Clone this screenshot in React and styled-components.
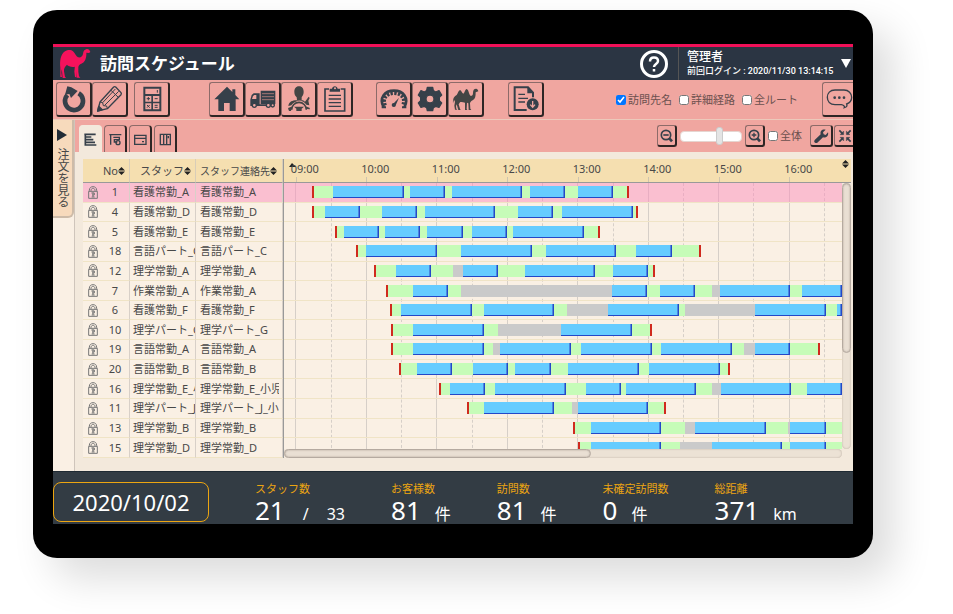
import React, { useState } from 'react';
import styled, { createGlobalStyle } from 'styled-components';

const DAY_START = -10; // minutes from 09:00
const DAY_END = 465;
const HOURS = ['09:00', '10:00', '11:00', '12:00', '13:00', '14:00', '15:00', '16:00'];

// visits: [start, minutes], waits: [from, to], all counted from 09:00
const STAFF = [
  { no: 1, name: '看護常勤_A', tel: '看護常勤_A', from: 14, to: 284, visits: [[32, 60], [97, 30], [133, 60], [199, 30], [240, 30]], waits: [] },
  { no: 4, name: '看護常勤_D', tel: '看護常勤_D', from: 14, to: 291, visits: [[25, 30], [73, 30], [110, 60], [189, 30], [227, 60]], waits: [] },
  { no: 5, name: '看護常勤_E', tel: '看護常勤_E', from: 33, to: 259, visits: [[41, 30], [76, 30], [112, 30], [150, 30], [185, 60]], waits: [] },
  { no: 18, name: '言語パート_C', tel: '言語パート_C', from: 51, to: 345, visits: [[60, 60], [141, 60], [213, 60], [290, 30]], waits: [] },
  { no: 12, name: '理学常勤_A', tel: '理学常勤_A', from: 67, to: 306, visits: [[85, 30], [142, 30], [195, 60], [270, 30]], waits: [[134, 142]] },
  { no: 7, name: '作業常勤_A', tel: '作業常勤_A', from: 77, to: 500, visits: [[100, 30], [269, 30], [310, 30], [361, 60], [431, 60]], waits: [[141, 269], [354, 361]] },
  { no: 6, name: '看護常勤_F', tel: '看護常勤_F', from: 80, to: 500, visits: [[90, 60], [160, 60], [266, 60], [391, 60], [461, 30]], waits: [[231, 266], [331, 391]] },
  { no: 10, name: '理学パート_G', tel: '理学パート_G', from: 81, to: 303, visits: [[100, 60], [226, 60]], waits: [[172, 226]] },
  { no: 19, name: '言語常勤_A', tel: '言語常勤_A', from: 81, to: 446, visits: [[100, 60], [174, 60], [243, 60], [311, 60], [391, 30]], waits: [[168, 174], [382, 391]] },
  { no: 20, name: '言語常勤_B', tel: '言語常勤_B', from: 88, to: 370, visits: [[103, 30], [151, 30], [187, 30], [232, 60], [301, 60]], waits: [] },
  { no: 16, name: '理学常勤_E_小児', tel: '理学常勤_E_小児', from: 122, to: 500, visits: [[131, 30], [170, 60], [247, 30], [281, 60], [362, 60], [435, 60]], waits: [[354, 362]] },
  { no: 11, name: '理学パート_J_小児', tel: '理学パート_J_小児', from: 146, to: 315, visits: [[160, 60], [240, 60]], waits: [[235, 240]] },
  { no: 13, name: '理学常勤_B', tel: '理学常勤_B', from: 236, to: 500, visits: [[251, 60], [340, 60], [421, 30]], waits: [[331, 340], [419, 421]] },
  { no: 15, name: '理学常勤_D', tel: '理学常勤_D', from: 240, to: 500, visits: [[251, 60], [354, 60], [421, 30]], waits: [[327, 354]] },
];

const STATS = [
  { label: 'スタッフ数', value: '21', slash: true, unit: '33' },
  { label: 'お客様数', value: '81', unit: '件' },
  { label: '訪問数', value: '81', unit: '件' },
  { label: '未確定訪問数', value: '0', unit: '件' },
  { label: '総距離', value: '371', unit: 'km' },
];

// fills the spaces between visits and waits with travel time
const toSegments = ({ from, to, visits, waits }) => {
  const busy = [
    ...visits.map(([s, m]) => ({ kind: 'visit', s, e: s + m })),
    ...waits.map(([s, e]) => ({ kind: 'wait', s, e })),
  ].sort((a, b) => a.s - b.s);
  const out = [{ kind: 'idle', s: DAY_START, e: from }];
  let now = from;
  busy.forEach((b) => {
    if (b.s > now) out.push({ kind: 'travel', s: now, e: b.s, first: now === from });
    out.push(b);
    now = b.e;
  });
  if (to > now) out.push({ kind: 'travel', s: now, e: to, last: true });
  if (to < DAY_END) out.push({ kind: 'idle', s: to, e: DAY_END });
  return out
    .filter((seg) => seg.s < DAY_END)
    .map((seg) => ({ ...seg, e: Math.min(seg.e, DAY_END), last: seg.last && seg.e <= DAY_END }));
};

const LogoCamel = () => (
  <svg width="32" height="31" viewBox="80 141 96 93" fill="#f5125c" aria-hidden="true">
    <path d="M84 200C82 182 84 160 98 151C107 145 117 146 122 151C129 157 131 166 137 169C145 171 150 166 152 159C153 150 156 146 163 144C168 143 172 147 174 153L170 156L162 155C163 170 158 184 147 188C142 190 139 193 138 198L138 212L140 226L144 230H133L132 212L128 197C118 199 108 196 104 191C99 196 94 202 95 211L98 227L101 231H91L89 210L88 205L87 216L89 228L84 228Z" />
    <path d="M128 192L126 212L128 228L132 229L135 194Z" />
  </svg>
);

const SortIcon = () => (
  <svg width="7" height="8" viewBox="0 0 14 16" fill="#222" aria-hidden="true">
    <path d="M7 0L14 7H0ZM7 16L0 9H14Z" />
  </svg>
);

const LockIcon = () => (
  <svg width="10" height="13" viewBox="0 0 30 39" fill="none" stroke="#777" strokeWidth="3" aria-hidden="true">
    <path d="M4 16V13C4 5 9 2 15 2S26 5 26 13V16M9 16V14C9 9 12 7 15 7S21 9 21 14V16" />
    <path d="M2 16H28V37H2Z" />
    <path d="M15 19V33M10 21H19V27H12M11 33H20" />
  </svg>
);

const dark = '#36404a';

const art = {
  reload: (
    <>
      <path d="M68 34A27 27 0 1 1 34 39" fill="none" stroke={dark} strokeWidth="14" />
      <path d="M34 13L46 16L65 27L45 48L40 36L27 38Z" fill={dark} />
    </>
  ),
  pencil: (
    <g fill="none" stroke={dark} strokeWidth="4" strokeLinejoin="round">
      <path d="M17 87L24 60L65 15Q68 13 71 15L87 32Q89 35 87 38L46 80Z" />
      <path d="M24 60L32 62L34 71L44 72L46 80M32 62L70 21M38 70L80 28M57 25L79 46" strokeWidth="3" />
      <path d="M17 87L20 73L31 83Z" fill={dark} />
    </g>
  ),
  calc: (
    <>
      <path fill={dark} fillRule="evenodd" d="M28 14H82V88H28ZM34 20V36H76V20ZM34 42V59H52V42ZM57 42V59H76V42ZM34 64V82H52V64ZM57 64V82H76V64Z" />
      <path d="M38 50H48M43 45V55M62 50H71M39 69L47 77M47 69L39 77M62 70H71M62 76H71M70 24V32" stroke={dark} strokeWidth="3" />
    </>
  ),
  home: <path fill={dark} d="M54 14L70 30V22H79V39L91 52H80V87H62V63H45V87H28V52H16Z" />,
  truck: (
    <>
      <path fill={dark} d="M47 26H91V66H47ZM20 39L26 34H44V67H90V72H16V53Z" />
      <path d="M51 35H87M51 44H87M51 53H87" stroke="#a27574" strokeWidth="3" />
      <path d="M24 42L28 39H34V51H21Z" fill="#f0a6a0" />
      <g fill="#f0a6a0" stroke={dark} strokeWidth="4">
        <circle cx="28" cy="70" r="6" />
        <circle cx="70" cy="70" r="6" />
        <circle cx="83" cy="70" r="5" />
      </g>
    </>
  ),
  driver: (
    <>
      <path fill="#434544" d="M54 13C64 13 68 21 68 30C68 38 64 42 62 46V54L48 54L47 46C43 42 40 38 40 30C40 21 44 13 54 13ZM42 55H66L72 59L83 44L86 48L82 56L85 70L76 68C66 52 44 52 31 70L22 72C24 61 30 57 42 55Z" />
      <path d="M32 83A22 22 0 0 1 76 83M22 80L34 76M86 80L75 76" fill="none" stroke="#434544" strokeWidth="5" />
      <path d="M39 74H69L62 80V87H46V80ZM22 80L32 78L30 87H24Z" fill="#434544" />
    </>
  ),
  clipboard: (
    <>
      <path d="M36 21H24V87H83V21H71" fill="none" stroke={dark} strokeWidth="5" />
      <path fill={dark} d="M38 20H45C46 10 61 10 62 20H69V29H38Z" />
      <circle cx="54" cy="19" r="3" fill="#f0a6a0" />
      <path d="M35 40H72M35 51H72M35 62H72M35 73H72" stroke={dark} strokeWidth="4" />
    </>
  ),
  gauge: (
    <>
      <path d="M23 76C8 48 26 26 54 26S100 48 85 76" fill="none" stroke={dark} strokeWidth="8" />
      <path d="M17 76H30M78 76H91" stroke={dark} strokeWidth="6" />
      <path d="M28 70C18 48 34 34 54 34S90 48 80 70" fill="none" stroke={dark} strokeWidth="10" strokeDasharray="7 4" />
      <path d="M49 68L69 47L57 74Z" fill={dark} />
      <circle cx="53" cy="69" r="6" fill={dark} />
    </>
  ),
  gear: (
    <path fill={dark} stroke={dark} strokeWidth="4" strokeLinejoin="round" fillRule="evenodd" d="M46 16H62L64 26L71 30L81 26L89 39L82 46V56L89 63L81 76L71 73L64 77L62 86H46L44 77L37 73L27 76L19 63L26 56V46L19 39L27 26L37 30L44 26ZM54 39A12 12 0 1 0 54 63A12 12 0 1 0 54 39Z" />
  ),
  camel: (
    <path fill="#434544" d="M15 64C14 48 20 42 26 39C30 33 32 25 36 24C41 26 42 34 46 35C50 33 51 22 56 21C62 23 62 35 67 41C72 43 75 39 75 33C75 24 78 20 84 20C89 20 90 25 91 28L83 31C83 43 82 51 74 55C70 57 67 60 66 64L67 80L70 84H62L61 64L57 62L56 81L58 84H51V62C44 60 38 60 36 61L32 67L36 80L38 84H31L26 67L24 73L25 80L28 83H21L19 71L21 59L18 53Z" />
  ),
  report: (
    <>
      <path d="M56 84H20V16H60L75 32V46" fill="none" stroke={dark} strokeWidth="6" />
      <path d="M58 16V34H75Z" fill={dark} />
      <path d="M31 37H51M31 49H60M31 60H51" stroke={dark} strokeWidth="4" />
      <circle cx="74" cy="67" r="18" fill={dark} />
      <path d="M74 57V74M67 68L74 76L81 68" fill="none" stroke="#f0a6a0" strokeWidth="4" />
    </>
  ),
  chat: (
    <>
      <path d="M39 24H66C80 24 89 34 89 46C89 56 83 63 74 66C76 71 75 75 67 77C69 73 64 69 58 68H39C24 68 16 58 16 46S24 24 39 24Z" fill="none" stroke={dark} strokeWidth="4" />
      <g fill={dark}>
        <circle cx="38" cy="47" r="4" />
        <circle cx="52" cy="47" r="4" />
        <circle cx="66" cy="47" r="4" />
      </g>
    </>
  ),
};

const smallArt = {
  zoomOut: (
    <g fill="none" stroke={dark} strokeWidth="5">
      <circle cx="30" cy="30" r="14" />
      <path d="M22 30H38" />
      <path d="M40 40L48 49" strokeWidth="8" />
    </g>
  ),
  zoomIn: (
    <g fill="none" stroke={dark} strokeWidth="5">
      <circle cx="30" cy="30" r="14" />
      <path d="M23 30H37M30 23V37" strokeWidth="4" />
      <path d="M40 40L48 49" strokeWidth="8" />
    </g>
  ),
  wrench: (
    <path fill={dark} d="M14 45L32 28C29 17 38 11 47 14L39 22L41 28L47 30L54 22C57 33 48 40 39 37L22 53C15 56 10 51 14 45Z" />
  ),
  shrink: (
    <g fill={dark} stroke={dark} strokeWidth="5">
      <path d="M16 16L25 25M50 16L41 25M16 50L25 41M50 50L41 41" />
      <path strokeWidth="1" d="M29 18V29H18ZM37 18V29H48ZM29 48V37H18ZM37 48V37H48Z" />
    </g>
  ),
};

// row views behind each tab
const tabArt = {
  gantt: <path d="M16 19H50M19 19V51H52M19 27H37M19 35H43M19 43H48" strokeWidth="5" />,
  route: (
    <>
      <path d="M16 20H52M20 20V50" />
      <path d="M28 28H46V35H31V42H40" />
      <circle cx="42" cy="44" r="6" />
    </>
  ),
  card: <path d="M17 22H51V49H17ZM17 31H51M39 41H45" />,
  board: <path d="M19 19H49V50H19ZM29 19V50M38 19V50M43 24V31" />,
};

const TOOL_GROUPS = [
  { gap: 3, items: [['reload', '更新'], ['pencil', '編集']] },
  { gap: 6, items: [['calc', '計算']] },
  { gap: 39, items: [['home', 'ホーム'], ['truck', '車両'], ['driver', 'ドライバー'], ['clipboard', '予定表']] },
  { gap: 23, items: [['gauge', '負荷'], ['gear', '設定'], ['camel', '最適化']] },
  { gap: 24, items: [['report', '帳票出力']] },
];

const TABS = [['gantt', 'ガントチャート'], ['route', 'ルート'], ['card', 'カード'], ['board', 'ボード']];

const ToolButton = ({ icon, label }) => (
  <Tool type="button" aria-label={label}>
    <svg viewBox="0 0 108 105" width="36" height="35" aria-hidden="true">{art[icon]}</svg>
  </Tool>
);

const MiniButton = ({ icon, label, width = 20 }) => (
  <Mini type="button" aria-label={label} $width={width}>
    <svg viewBox="0 0 66 66" width="22" height="22" aria-hidden="true">{smallArt[icon]}</svg>
  </Mini>
);

const Check = ({ children, ...rest }) => (
  <CheckLabel>
    <input type="checkbox" {...rest} />
    {children}
  </CheckLabel>
);

const Timeline = () => (
  <Chart>
    <Axis>
      <AxisSpace>
        <svg width="7" height="5" viewBox="0 0 7 5" fill="#222" aria-hidden="true"><path d="M3 0L7 4H0Z" /></svg>
      </AxisSpace>
      {HOURS.map((h) => (
        <AxisHour key={h} $minutes={h === '16:00' ? 45 : 60}>
          <span>{h}</span>
          <i />
        </AxisHour>
      ))}
      <AxisSort><SortIcon /></AxisSort>
    </Axis>
    <ChartMiddle>
      <Plot>
        <Lines>
          <Line $minutes={10} $kind="none" />
          {Array.from({ length: 16 }, (_, i) => (
            <Line key={i} $minutes={i === 15 ? 15 : 30} $kind={i % 2 ? 'dashed' : 'solid'} />
          ))}
        </Lines>
        <Rows>
          {STAFF.map((s) => (
            <PlotRow key={s.no} $active={s.no === 1}>
              {toSegments(s).map((seg) => (
                <Segment
                  key={seg.s}
                  $kind={seg.kind}
                  $first={seg.first}
                  $last={seg.last}
                  style={{ flexGrow: seg.e - seg.s }}
                />
              ))}
            </PlotRow>
          ))}
        </Rows>
      </Plot>
      <Track $vertical><Thumb $vertical /></Track>
    </ChartMiddle>
    <BottomTrack><Track><Thumb /></Track></BottomTrack>
  </Chart>
);

const App = () => {
  const [showNames, setShowNames] = useState(true);
  const [scale, setScale] = useState(66);
  const [tab, setTab] = useState('gantt');

  return (
    <Page>
      <GlobalStyle />
      <Tablet>
        <Screen>
          <Header>
            <LogoCamel />
            <h1>訪問スケジュール</h1>
            <HelpButton type="button" aria-label="ヘルプ">
              <svg width="28" height="28" viewBox="0 0 56 56" fill="none" stroke="#fff" aria-hidden="true">
                <circle cx="28" cy="28" r="25" strokeWidth="6" />
                <path d="M20 23C20 18 23 15 28 15S36 18 36 22C36 28 28 28 28 34" strokeWidth="5" />
                <path d="M28 38V43" strokeWidth="5" />
              </svg>
            </HelpButton>
            <User>
              <div>
                <strong>管理者</strong>
                <small>前回ログイン : 2020/11/30 13:14:15</small>
              </div>
              <svg width="10" height="9" viewBox="0 0 10 9" fill="#fff" aria-hidden="true"><path d="M0 0H10L5 9Z" /></svg>
            </User>
          </Header>

          <Toolbar>
            {TOOL_GROUPS.map((g) => (
              <ToolGroup key={g.items[0][0]} $gap={g.gap}>
                {g.items.map(([icon, label]) => <ToolButton key={icon} icon={icon} label={label} />)}
              </ToolGroup>
            ))}
            <Checks>
              <Check checked={showNames} onChange={(e) => setShowNames(e.target.checked)}>訪問先名</Check>
              <Check>詳細経路</Check>
              <Check>全ルート</Check>
            </Checks>
            <ToolButton icon="chat" label="チャット" />
          </Toolbar>

          <Body>
            <Side>
              <SideTab type="button">
                <svg width="10" height="12" viewBox="0 0 10 12" fill="#222c36" aria-hidden="true"><path d="M0 0L10 6L0 12Z" /></svg>
                <span>注文を見る</span>
              </SideTab>
            </Side>
            <Main>
              <TabBar>
                {TABS.map(([icon, label]) => (
                  <Tab key={icon} type="button" aria-label={label} $active={tab === icon} onClick={() => setTab(icon)}>
                    <svg viewBox="0 0 69 69" width="23" height="23" fill="none" stroke={dark} strokeWidth="4" aria-hidden="true">
                      {tabArt[icon]}
                    </svg>
                  </Tab>
                ))}
                <ViewTools>
                  <MiniButton icon="zoomOut" label="縮小" />
                  <Range
                    type="range"
                    aria-label="表示倍率"
                    value={scale}
                    onChange={(e) => setScale(Number(e.target.value))}
                  />
                  <MiniButton icon="zoomIn" label="拡大" />
                  <Check>全体</Check>
                  <ViewEnd>
                    <MiniButton icon="wrench" label="調整" width={23} />
                    <MiniButton icon="shrink" label="全画面解除" width={23} />
                  </ViewEnd>
                </ViewTools>
              </TabBar>
              <Board>
                <StaffTable>
                  <colgroup>
                    <col width="20" />
                    <col width="27" />
                    <col width="66" />
                    <col width="87" />
                  </colgroup>
                  <thead>
                    <tr>
                      <th colSpan={2}><HeadCell $end>No<SortIcon /></HeadCell></th>
                      <th><HeadCell $end>スタッフ<SortIcon /></HeadCell></th>
                      <th><HeadCell>スタッフ連絡先<SortIcon /></HeadCell></th>
                    </tr>
                  </thead>
                  <tbody>
                    {STAFF.map((s) => (
                      <StaffRow key={s.no} $active={s.no === 1}>
                        <td><LockIcon /></td>
                        <td>{s.no}</td>
                        <td><Clip>{s.name}</Clip></td>
                        <td><Clip>{s.tel}</Clip></td>
                      </StaffRow>
                    ))}
                  </tbody>
                </StaffTable>
                <Timeline />
              </Board>
            </Main>
          </Body>

          <Footer>
            <DateButton type="button">2020/10/02</DateButton>
            {STATS.map((s) => (
              <Stat key={s.label}>
                <dt>{s.label}</dt>
                <dd>
                  <b>{s.value}</b>
                  {s.slash && <em>/</em>}
                  <span>{s.unit}</span>
                </dd>
              </Stat>
            ))}
          </Footer>
        </Screen>
      </Tablet>
    </Page>
  );
};

export default App;

const GlobalStyle = createGlobalStyle`
  *, *::before, *::after {
    box-sizing: border-box;
  }
  body {
    margin: 0;
    background: #fff;
    font-family: 'Noto Sans', 'Noto Sans CJK JP', sans-serif;
    font-size: 11px;
    line-height: 16px;
    color: #484848;
  }
  button {
    padding: 0;
    font: inherit;
    color: inherit;
    cursor: pointer;
  }
  svg {
    display: block;
    flex-shrink: 0;
  }
`;

const Page = styled.div`
  padding: 10px 80px 56px 33px;
  overflow: hidden;
`;

const Tablet = styled.div`
  padding: 34px 20px;
  border-radius: 24px;
  background: #000;
  box-shadow: 20px 20px 40px rgba(0, 0, 0, 0.14);
`;

const Screen = styled.main`
  overflow: hidden;
  background: #f3e9dc;
`;

const Header = styled.header`
  display: flex;
  align-items: center;
  height: 36px;
  padding-left: 6px;
  border-top: 3px solid #f01058;
  background: #2b3543;
  color: #fff;

  h1 {
    flex: 1;
    margin: 0 0 0 9px;
    font-size: 17px;
    line-height: 24px;
  }
`;

const HelpButton = styled.button`
  margin-right: 10px;
  border: 0;
  background: none;
`;

const User = styled.div`
  display: flex;
  align-items: center;
  justify-content: space-between;
  align-self: stretch;
  width: 175px;
  padding: 0 2px 0 8px;
  border-left: 1px solid #555;

  strong,
  small {
    display: block;
    line-height: 14px;
  }
  strong {
    font-size: 12px;
    font-weight: 500;
  }
  small {
    font-family: Roboto, 'Noto Sans CJK JP', sans-serif;
    font-size: 9px;
    font-weight: 500;
  }
`;

const Toolbar = styled.div`
  display: flex;
  align-items: center;
  height: 40px;
  margin-right: -5px;
  border-bottom: 1px solid #ecc9bb;
  background: #f0a6a0;
`;

const ToolGroup = styled.div`
  display: flex;
  margin-left: ${({ $gap }) => $gap}px;
`;

const Tool = styled.button`
  display: flex;
  align-items: center;
  justify-content: center;
  width: 36px;
  height: 35px;
  border: 1px solid #8d6b69;
  border-right: 2px solid #2e2625;
  border-bottom: 2px solid #2e2625;
  border-radius: 3px;
  background: none;
`;

const Checks = styled.div`
  display: flex;
  gap: 7px;
  margin: 0 24px 0 auto;
`;

const CheckLabel = styled.label`
  display: flex;
  align-items: center;
  gap: 2px;
  color: #6b504e;

  input {
    width: 10px;
    height: 10px;
    margin: 0;
  }
`;

const Body = styled.div`
  display: flex;
`;

const Side = styled.aside`
  width: 22px;
  border-right: 1px solid #cfc5bb;
  background: #faf0e4;
`;

const SideTab = styled.button`
  display: flex;
  flex-direction: column;
  align-items: center;
  gap: 7px;
  width: 21px;
  height: 98px;
  padding: 9px 1px 0 0;
  border: 0;
  border-right: 2px solid #cdbba8;
  border-bottom: 2px solid #cdbba8;
  border-radius: 0 0 6px 0;
  background: #f7dabc;

  span {
    writing-mode: vertical-rl;
    font-size: 12px;
  }
`;

const Main = styled.section`
  flex: 1;
  min-width: 0;
`;

const TabBar = styled.div`
  display: flex;
  align-items: flex-end;
  gap: 2px;
  height: 32px;
  margin-right: -4px;
  padding-left: 4px;
  background: #f0a6a0;
`;

const Tab = styled.button`
  display: flex;
  align-items: center;
  justify-content: center;
  width: 23px;
  height: 27px;
  border: 1px solid ${({ $active }) => ($active ? '#f3e9dc' : '#8d6b69')};
  border-right: ${({ $active }) => ($active ? '1px solid #f3e9dc' : '2px solid #2e2625')};
  border-bottom: 0;
  border-radius: 4px 4px 0 0;
  background: ${({ $active }) => ($active ? '#f3e9dc' : 'none')};
`;

const ViewTools = styled.div`
  display: flex;
  align-items: center;
  align-self: flex-start;
  gap: 3px;
  margin: 5px 0 0 auto;
`;

const Mini = styled.button`
  display: flex;
  align-items: center;
  justify-content: center;
  width: ${({ $width }) => $width}px;
  height: 22px;
  border: 1px solid #8d6b69;
  border-right: 2px solid #2e2625;
  border-bottom: 2px solid #2e2625;
  border-radius: 3px;
  background: none;
`;

const ViewEnd = styled.div`
  display: flex;
  gap: 1px;
  margin-left: 5px;
`;

const Range = styled.input`
  width: 62px;
  height: 18px;
  margin: 0;
  appearance: none;
  background: none;

  &::-webkit-slider-runnable-track {
    height: 11px;
    border: 1px solid #e6d5d0;
    border-radius: 4px;
    background: #fff;
  }
  &::-webkit-slider-thumb {
    appearance: none;
    width: 7px;
    height: 18px;
    margin-top: -5px;
    border: 1px solid #ccc;
    border-radius: 3px;
    background: #e4e4e4;
  }
`;

const Board = styled.div`
  display: flex;
  padding: 7px 2px 13px 8px;
`;

const StaffTable = styled.table`
  width: 200px;
  height: 299px;
  table-layout: fixed;
  border-spacing: 0;

  th {
    height: 24px;
    padding: 0;
    border-right: 1px solid #d8cdb8;
    border-bottom: 1px solid #999;
    background: #f5dfb0;
    font-weight: 400;
    font-size: 11px;
  }
  td {
    padding: 0;
    border-bottom: 1px solid #f0e4c6;
  }
  td:first-child {
    padding-left: 5px;
  }
  td:nth-child(2) {
    padding-right: 2px;
    text-align: center;
  }
  td:nth-child(n + 2) {
    border-right: 1px solid #d8d0c8;
  }
  td:nth-child(n + 3) {
    padding-left: 3px;
  }
  td:last-child {
    padding: 0 3px 0 4px;
  }
`;

const HeadCell = styled.div`
  display: flex;
  align-items: center;
  justify-content: ${({ $end }) => ($end ? 'flex-end' : 'flex-start')};
  padding: 0 4px;
  font-size: ${({ $end }) => ($end ? 11 : 10)}px;
  white-space: nowrap;
`;

const StaffRow = styled.tr`
  background: ${({ $active }) => ($active ? '#fabfd0' : '#faf0e4')};
`;

const Clip = styled.div`
  overflow: hidden;
  white-space: nowrap;
`;

const Chart = styled.div`
  display: flex;
  flex: 1;
  flex-direction: column;
  min-width: 0;
  border-left: 1px solid #999;
`;

const Axis = styled.div`
  display: flex;
  height: 24px;
  border-bottom: 1px solid #999;
  background: #f5dfb0;
`;

const AxisSpace = styled.div`
  flex: 10 1 0;
  min-width: 0;

  svg {
    margin: 4px 0 0 5px;
  }
`;

const AxisHour = styled.div`
  display: flex;
  flex: ${({ $minutes }) => $minutes} 1 0;
  flex-direction: column;
  justify-content: space-between;
  min-width: 0;

  span {
    margin: 2px 0 0 -5px;
  }
  i {
    height: 5px;
    border-left: 1px solid #cfc4ae;
  }
`;

const AxisSort = styled.div`
  width: 9px;
  padding-top: 1px;
`;

const ChartMiddle = styled.div`
  display: flex;
  height: 266px;
`;

const Plot = styled.div`
  display: grid;
  flex: 1;
  grid-template-rows: 275px;
  min-width: 0;
  overflow: hidden;
  background: #faf0e4;
`;

const Lines = styled.div`
  display: flex;
  grid-area: 1 / 1;
`;

const Line = styled.div`
  flex: ${({ $minutes }) => $minutes} 1 0;
  border-left: ${({ $kind }) => ($kind === 'none' ? 0 : `1px ${$kind} #d6cfc8`)};
`;

const Rows = styled.div`
  display: grid;
  grid-area: 1 / 1;
  grid-template-rows: repeat(14, 1fr);
`;

const PlotRow = styled.div`
  display: flex;
  align-items: center;
  min-width: 0;
  border-bottom: 1px solid #f0e4c6;
  background: ${({ $active }) => ($active ? 'rgba(250, 142, 188, 0.5)' : 'none')};
`;

const fills = { idle: 'none', travel: '#c6fcb8', visit: '#66ccff', wait: '#cacaca' };

const edge = ({ $kind, $first, $last }) => {
  if ($kind === 'visit') return 'inset -1px -1px #2348c8, inset -2px 0 #4a86e0';
  if ($first) return 'inset 2px 0 #d02a1e';
  if ($last) return 'inset -2px 0 #d02a1e';
  return 'none';
};

const Segment = styled.div`
  flex: 0 1 0;
  height: 12px;
  background: ${({ $kind }) => fills[$kind]};
  box-shadow: ${edge};
`;

const Track = styled.div`
  flex: ${({ $vertical }) => ($vertical ? '0 0 9px' : 1)};
  border-radius: 5px;
  background: #ece2d5;
  box-shadow: inset 0 0 2px #b5aa9e;
`;

const Thumb = styled.div`
  width: ${({ $vertical }) => ($vertical ? '100%' : '55%')};
  height: ${({ $vertical }) => ($vertical ? '64%' : '100%')};
  border-radius: 5px;
  border: 1px solid #b5aaa0;
  background: #e9dfd3;
  box-shadow: inset 0 0 2px #a89d92;
`;

const BottomTrack = styled.div`
  display: flex;
  height: 9px;
  padding-right: 9px;
`;

const Footer = styled.footer`
  display: flex;
  align-items: flex-start;
  gap: 46px;
  height: 53px;
  border-top: 1px solid #1f2a33;
  background: #333c44;
`;

const DateButton = styled.button`
  width: 156px;
  height: 40px;
  margin-top: 10px;
  border: 1px solid #eca511;
  border-radius: 8px;
  background: none;
  color: #fff;
  font-size: 22px;
  line-height: 36px;
`;

const Stat = styled.dl`
  margin: 9px 0 0;

  dt {
    color: #eca511;
    font-size: 11px;
    line-height: 16px;
  }
  dd {
    display: flex;
    align-items: baseline;
    gap: 14px;
    margin: 0;
    color: #fff;
    font-size: 16px;
    line-height: 26px;
  }
  b {
    font-size: 26px;
    font-weight: 400;
  }
  em {
    padding: 0 4px;
    font-style: normal;
  }
`;
